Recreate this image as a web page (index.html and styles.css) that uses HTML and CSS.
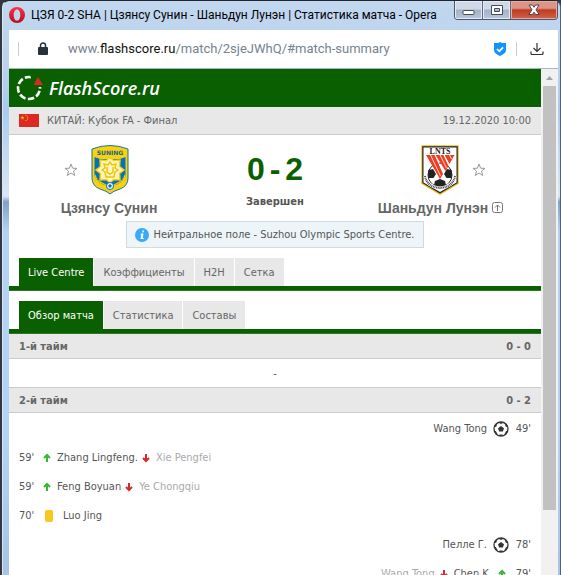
FILE: index.html
```html
<!DOCTYPE html>
<html lang="ru">
<head>
<meta charset="utf-8">
<title>ЦЗЯ 0-2 SHA | Цзянсу Сунин - Шаньдун Лунэн | Статистика матча</title>
<link rel="stylesheet" href="styles.css">
</head>
<body>
<svg class="defs" aria-hidden="true">
  <symbol id="star" viewBox="0 0 14 14"><path d="M7 1l1.600 4.200 4.400.2-3.500 2.700 1.200 4.400L7 10l-3.700 2.500 1.200-4.400L1 5.400l4.400-.2z" fill="none" stroke="#999"/></symbol>
  <symbol id="up" viewBox="0 0 8 10"><path d="M4 9V2M1 5l3-3 3 3" fill="none" stroke="#3b3" stroke-width="2"/></symbol>
  <symbol id="down" viewBox="0 0 8 10"><path d="M4 1v7M1 5l3 3 3-3" fill="none" stroke="#d22a30" stroke-width="2"/></symbol>
  <symbol id="ball" viewBox="0 0 16 16"><circle cx="8" cy="8" r="7" fill="#fff" stroke="#333" stroke-width="1.300"/><path d="M8 5l3 2.200-1.100 3.400H6.100L5 7.200zM5 1.500h6L8 3zM1 6l1.200-3 2 .2-1 2.600zM15 6l-1.200-3-2 .2 1 2.600zM1 9.500l1.800.4 1.700 3-1 .9zM15 9.500l-1.800.4-1.700 3 1 .9zM6 14.500l.5-1h3l.5 1-2 .6z" fill="#333"/></symbol>
</svg>
<div class="window">
  <header class="titlebar">
    <svg class="opera" viewBox="0 0 16 16" aria-hidden="true"><defs><linearGradient id="red" x2="0" y2="1"><stop stop-color="#ff3348"/><stop offset="1" stop-color="#b50f1c"/></linearGradient></defs><path fill="url(#red)" fill-rule="evenodd" d="M8 0a8 8 0 1 0 0 16A8 8 0 0 0 8 0zm0 2.400c2 0 3.300 2.500 3.300 5.600S10 13.600 8 13.600 4.700 11.100 4.700 8 6 2.400 8 2.400z"/></svg>
    <h1 class="title">ЦЗЯ 0-2 SHA | Цзянсу Сунин - Шаньдун Лунэн | Статистика матча - Opera</h1>
    <div class="controls">
      <button class="control" aria-label="Свернуть"><svg viewBox="0 0 14 12"><rect x="1" y="6.500" width="11" height="4" rx="1" fill="#fff" stroke="#454b59"/></svg></button>
      <button class="control" aria-label="Развернуть"><svg viewBox="0 0 14 12"><path d="M1.500 1.500h11v9h-11zM4.500 4.500v3h5v-3z" fill="#fff" stroke="#454b59" fill-rule="evenodd"/></svg></button>
      <button class="control control-close" aria-label="Закрыть"><svg viewBox="0 0 14 12"><path d="M2 1h3.500L7 3.300 8.500 1H12L9 5.800l3.200 4.700H8.600L7 8.200l-1.600 2.300H1.800L5 5.800z" fill="#fff" stroke="#554450"/></svg></button>
    </div>
  </header>
  <div class="address">
    <span class="divider"></span>
    <svg class="lock" viewBox="0 0 12 14" aria-hidden="true"><rect x="1" y="5" width="10" height="8" rx="1" fill="#26323e"/><path d="M3.500 6V3.500a2.500 2.500 0 0 1 5 0V6" fill="none" stroke="#26323e" stroke-width="1.500"/></svg>
    <p class="url">www.<span class="host">flashscore.ru</span>/match/2sjeJWhQ/#match-summary</p>
    <svg class="shield" viewBox="0 0 14 14" aria-hidden="true"><path d="M7 0l2 1h4v7c0 3-3 4.500-6 6-3-1.500-6-3-6-6V1h4z" fill="#1294ff"/><path d="M4 7l2.300 2.300L10 5.400" fill="none" stroke="#fff" stroke-width="1.700"/></svg>
    <span class="divider"></span>
    <button class="download" aria-label="Загрузки"><svg viewBox="0 0 14 12"><path d="M7 0v8M3.500 5L7 8.500 10.500 5M1 8.500v2q0 1 1 1h10q1 0 1-1v-2" fill="none" stroke="#333" stroke-width="1.200"/></svg></button>
  </div>
  <div class="viewport">
    <main class="page">
      <a class="brand" href="#">
        <svg class="brand-mark" viewBox="0 0 28 26" aria-hidden="true"><circle cx="13" cy="13" r="11" fill="none" stroke="#fff" stroke-width="2.600" stroke-dasharray="6.500 2.370" stroke-dashoffset="-3"/><path d="M14 0h14v12H18z" fill="#0a6000"/><path d="M22 2l5 8h-9.500z" fill="#d6282c"/></svg>
        <span class="brand-name">FlashScore.ru</span>
      </a>
      <div class="league">
        <svg class="flag" viewBox="0 0 20 13" aria-hidden="true"><path fill="#dc2a22" d="M0 0h20v13H0z"/><path fill="#f8c51c" d="M3.500 1.500l.6 1.400h1.500l-1.200 1 .5 1.500-1.400-.9-1.400.9.5-1.500-1.200-1h1.500zM6.500 1h1v1h-1zM8 2.500h1v1H8zM8 4.500h1v1H8zM6.500 6h1v1h-1z"/></svg>
        <span class="league-name">КИТАЙ: Кубок FA - Финал</span>
        <time>19.12.2020 10:00</time>
      </div>
      <section class="match">
        <div class="team">
          <div class="emblem">
            <button class="star" aria-label="В избранное"><svg viewBox="0 0 14 14"><use href="#star"/></svg></button>
            <svg class="crest" viewBox="0 0 38 50" role="img" aria-label="Suning"><path d="M1 4Q19-3 37 4v29q0 8-8 11-7 2-10 5-3-3-10-5-8-3-8-11z" fill="#f7d20d" stroke="#1d6fa5"/><path d="M3.500 11.500l5 2h21l5-2V32q0 6-7 8l-8.500 4-8.500-4q-7-2-7-8z" fill="#0870b9"/><path d="M3 10h32v2l-7 2H10l-7-2z" fill="#f7d20d"/><text x="19" y="9.500" class="crest-suning">SUNING</text><path d="M4 29l3 6 9 5-1 3-9-4-3-6zM34 29l-3 6-9 5 1 3 9-4 3-6z" fill="#f7d20d"/><path d="M19 12l3.500 3.500L29 15l-.5 6.500L33 25l-4.500 3.500L29 35l-6.500-.5L19 38l-3.500-3.500L9 35l.5-6.500L5 25l4.500-3.500L9 15l6.500.5z" fill="#fff6c7" stroke="#f7d20d" stroke-width="1.500"/><path d="M13 19l4 1 2-3 2 3 4-1-1 4 3 2-3 2-1 5h-8l-1-5-3-2 3-2zM16 22v5l3 2 3-2v-5" fill="none" stroke="#f0c400" stroke-width="1.500"/><circle cx="19" cy="41" r="3.500" fill="#fff" stroke="#0870b9"/><path d="M19 39l1.800 1.500-.7 2h-2.200l-.7-2z" fill="#0870b9"/><path d="M5 32q2 6 9 8M33 32q-2 6-9 8" fill="none" stroke="#6d8a4a" stroke-dasharray="1 1"/></svg>
          </div>
          <a class="team-name" href="#">Цзянсу Сунин</a>
        </div>
        <div class="result">
          <div class="score"><span>0</span><span>-</span><span>2</span></div>
          <div class="status">Завершен</div>
        </div>
        <div class="team team-away">
          <div class="emblem">
            <button class="star" aria-label="В избранное"><svg viewBox="0 0 14 14"><use href="#star"/></svg></button>
            <svg class="crest" viewBox="0 0 38 50" role="img" aria-label="LNTS"><path d="M.3.300h37.400v38.500L19 50 .3 38.800z" fill="#e9bd20"/><path d="M1.300 1.300h35.400V38L19 48.500 1.300 38z" fill="#222"/><path d="M2.500 2.500h33v35L19 47 2.500 37.500z" fill="#fff"/><text x="19" y="9" class="crest-lnts">LNTS</text><circle cx="19" cy="30" r="12" fill="#fff" stroke="#222"/><path d="M7.500 25l4.500-1 3 5-2.500 4h-5q-1-4 0-8zM30.500 25l-4.500-1-3 5 2.500 4h5q1-4 0-8zM14 36l5-2 5 2 1 4-6 2-6-2z" fill="#222"/><path d="M5 10h9l8 19-3 5zM14.500 10h8l5 11-3 5zM23.500 10h10l-5 9z" fill="#f03c22"/><path d="M9.500 10l10 21M19 10l6.500 13M28.500 10l2 4M14 10l8 17M23 10l5 10" stroke="#fff" stroke-width=".8"/><path d="M4 31q2 11 15 12 13-1 15-12" fill="none" stroke="#fff" stroke-width="3"/><path d="M4 31q2 11 15 12 13-1 15-12" fill="none" stroke="#444" stroke-width="2" stroke-dasharray="1 .7"/></svg>
          </div>
          <a class="team-name" href="#">Шаньдун Лунэн<svg class="advance" viewBox="0 0 12 12" aria-hidden="true"><rect x=".5" y=".5" width="10" height="10" rx="2" fill="none" stroke="#777"/><path d="M5.500 9V3M3 5.500L5.500 3 8 5.500" fill="none" stroke="#777"/></svg></a>
        </div>
      </section>
      <p class="notice"><svg viewBox="0 0 14 14" aria-hidden="true"><circle cx="7" cy="7" r="7" fill="#3aa9f8"/><path d="M7.400 2.500h1.500v1.700H7.200zM6 5.500h2.500L7.700 10h1v1H5.500L6.300 6.500H5.500z" fill="#fff"/></svg>Нейтральное поле - Suzhou Olympic Sports Centre.</p>
      <nav class="tabs">
        <a class="tab tab-active" href="#">Live Centre</a>
        <a class="tab" href="#">Коэффициенты</a>
        <a class="tab" href="#">H2H</a>
        <a class="tab" href="#">Сетка</a>
      </nav>
      <nav class="tabs">
        <a class="tab tab-active" href="#">Обзор матча</a>
        <a class="tab" href="#">Статистика</a>
        <a class="tab" href="#">Составы</a>
      </nav>
      <h2 class="period"><span>1-й тайм</span><span>0 - 0</span></h2>
      <p class="empty">-</p>
      <h2 class="period period-second"><span>2-й тайм</span><span>0 - 2</span></h2>
      <ul class="events">
        <li class="event event-away"><span class="minute">49'</span><svg class="ball"><use href="#ball"/></svg><span>Wang Tong</span></li>
        <li class="event"><span class="minute">59'</span><svg class="arrow"><use href="#up"/></svg><span>Zhang Lingfeng.</span><svg class="arrow arrow-out"><use href="#down"/></svg><span class="out">Xie Pengfei</span></li>
        <li class="event"><span class="minute">59'</span><svg class="arrow"><use href="#up"/></svg><span>Feng Boyuan</span><svg class="arrow arrow-out"><use href="#down"/></svg><span class="out">Ye Chongqiu</span></li>
        <li class="event"><span class="minute">70'</span><span class="card"></span><span>Luo Jing</span></li>
        <li class="event event-away"><span class="minute">78'</span><svg class="ball"><use href="#ball"/></svg><span>Пелле Г.</span></li>
        <li class="event event-away"><span class="minute">79'</span><svg class="arrow"><use href="#up"/></svg><span>Chen K.</span><svg class="arrow arrow-out"><use href="#down"/></svg><span class="out">Wang Tong</span></li>
      </ul>
    </main>
    <div class="scrollbar" aria-hidden="true">
      <svg viewBox="0 0 17 17"><path d="M5 11l3.500-4 3.500 4z" fill="#a3a3a3"/></svg>
      <div class="thumb"></div>
    </div>
  </div>
</div>
</body>
</html>
```
FILE: styles.css
```css
* { box-sizing: border-box; }

body {
  margin: 0;
  height: 100vh;
  overflow: hidden;
  background: #34383e;
  color: #555;
  font: 11px/14px "DejaVu Sans Condensed", "DejaVu Sans", sans-serif;
}

h1, h2, p, ul { margin: 0; padding: 0; }
a { color: inherit; text-decoration: none; }
button { padding: 0; border: 0; background: none; display: block; }
svg { display: block; flex: none; }
.defs { position: absolute; width: 0; height: 0; }

.window {
  display: flex;
  flex-direction: column;
  height: 100vh;
  margin-left: 2px;
  padding: 0 2px 0 6px;
  border-top: 1px solid #20242c;
  border-left: 1px solid #d6e7f6;
  border-right: 1px solid #526078;
  border-radius: 7px 7px 0 0;
  background:
    linear-gradient(#c1d7ef 0, #bdd3ec 10%, #a9cbef 19%, #dbe7f3 34%, #7fa2c8 35%, #b3d1f2 40%, #b3d3f7 75%, #a7c4e4 100%);
}

.titlebar {
  display: flex;
  align-items: center;
  height: 29px;
  flex: none;
  padding-bottom: 1px;
}
.opera { width: 16px; height: 16px; }
.title {
  flex: 1;
  min-width: 0;
  margin-left: 6px;
  overflow: hidden;
  white-space: nowrap;
  color: #000;
  font: 400 12px/20px Roboto, sans-serif;
}
.controls {
  display: flex;
  align-self: flex-start;
  border: 1px solid #4c5668;
  border-top: 0;
  border-radius: 0 0 4px 4px;
  overflow: hidden;
}
.control {
  display: grid;
  place-items: center;
  width: 28px;
  height: 18px;
  border-right: 1px solid #5f6879;
  box-shadow: inset 0 0 0 1px #e4ebf6;
  background: linear-gradient(#cfd9e7 45%, #a4b1c6 50%, #b9c6db);
}
.control svg { width: 14px; height: 12px; }
.control-close {
  width: 46px;
  border: 0;
  box-shadow: inset 0 0 0 1px #e8a99f;
  background: linear-gradient(#dc9488 40%, #c23a20 50%, #cf654a);
}

.address {
  display: flex;
  align-items: center;
  flex: none;
  height: 39px;
  padding: 0 14px 0 9px;
  border-bottom: 1px solid #a9b6c6;
  background: #fff;
}
.divider { width: 1px; height: 14px; background: #ccc; }
.lock { width: 12px; height: 14px; margin: 0 19px 0 18px; }
.url {
  flex: 1;
  min-width: 0;
  overflow: hidden;
  white-space: nowrap;
  color: #75838f;
  font: 13px/20px Roboto, sans-serif;
}
.host { color: #111; }
.shield { width: 14px; height: 14px; margin-right: 9px; }
.download { margin-left: 13px; }
.download svg { width: 14px; height: 12px; }

.viewport { display: flex; flex: 1; min-height: 0; background: #fff; }
.page {
  display: flex;
  flex: 1;
  flex-direction: column;
  min-width: 0;
  overflow: hidden;
}
.page > * { flex: none; }
.scrollbar { flex: none; width: 17px; background: #f1f1f1; }
.scrollbar svg { width: 17px; height: 17px; }
.thumb { height: 424px; margin: 0 2px; background: #c1c1c1; }

.brand {
  display: flex;
  align-items: center;
  height: 38px;
  padding-left: 7px;
  background: #0a6000;
  color: #fff;
}
.brand-mark { width: 28px; height: 26px; }
.brand-name { margin-left: 5px; font: italic 600 18px/24px "Open Sans", sans-serif; }

.league {
  display: flex;
  align-items: center;
  height: 28px;
  padding: 0 10px;
  border-bottom: 1px solid #ccc;
  background: #e8e8e8;
  color: #666;
}
.flag { width: 20px; height: 13px; margin-right: 8px; }
.league time { margin-left: auto; }

.match {
  display: grid;
  grid-template-columns: 1fr 132px 1fr;
  height: 86px;
  padding-top: 10px;
}
.team { text-align: center; }
.emblem { display: flex; align-items: center; justify-content: center; gap: 13px; padding-right: 26px; }
.team-away .emblem { flex-direction: row-reverse; padding: 0 0 0 24px; }
.star svg { width: 14px; height: 14px; }
.crest { width: 38px; height: 50px; }
.crest-suning { fill: #17629c; font: 700 6px "DejaVu Sans", sans-serif; text-anchor: middle; }
.crest-lnts { fill: #222; font: 700 8px "Liberation Serif", serif; text-anchor: middle; }
.team-name {
  display: flex;
  align-items: center;
  justify-content: center;
  margin-top: 5px;
  color: #666;
  font: 700 14px/16px "Liberation Sans", sans-serif;
}
.advance { width: 12px; height: 12px; margin-left: 4px; }
.score {
  display: flex;
  justify-content: center;
  gap: 5px;
  padding-top: 6px;
  color: #0a6000;
  font: 700 32px/36px "Liberation Sans", sans-serif;
}
.status { margin-top: 8px; text-align: center; font-weight: 700; }

.notice {
  display: flex;
  align-items: center;
  gap: 4px;
  width: fit-content;
  height: 27px;
  margin: 0 auto;
  padding: 0 8px;
  border: 1px solid #d0dbe0;
  background: #edf5f9;
}
.notice svg { width: 14px; height: 14px; }

.tabs {
  display: flex;
  gap: 1px;
  margin: 10px 0 1px;
  padding: 0 10px;
  border-bottom: 4px solid #0a6000;
  box-shadow: 0 1px #2c7823;
}
.tab { padding: 8px 9px 6px; background: #e8e8e8; color: #666; }
.tab-active { background: #0a6000; color: #fff; }

.period {
  display: flex;
  justify-content: space-between;
  height: 25px;
  padding: 0 10px;
  border-bottom: 1px solid #ccc;
  background: #e8e8e8;
  color: #666;
  font-size: 11px;
  line-height: 26px;
}
.period-second { height: 26px; border-top: 1px solid #ccc; }
.empty { height: 28px; line-height: 29px; text-align: center; }

.events { padding-top: 1px; list-style: none; }
.event { display: flex; align-items: center; height: 29px; padding: 0 10px; }
.event-away { flex-direction: row-reverse; }
.minute { width: 24px; }
.event-away .minute { width: 22px; text-align: right; }
.arrow { width: 8px; height: 10px; margin-right: 6px; }
.arrow-out { margin-left: 4px; }
.event-away .arrow { margin: 0 3px 0 6px; }
.event-away .arrow-out { margin: 0 6px 0 5px; }
.ball { width: 16px; height: 16px; margin: 0 0 0 6px; }
.card { width: 8px; height: 12px; margin: 0 10px 0 2px; border-radius: 2px; background: #f8c81c; }
.out { color: #aaa; }
```
